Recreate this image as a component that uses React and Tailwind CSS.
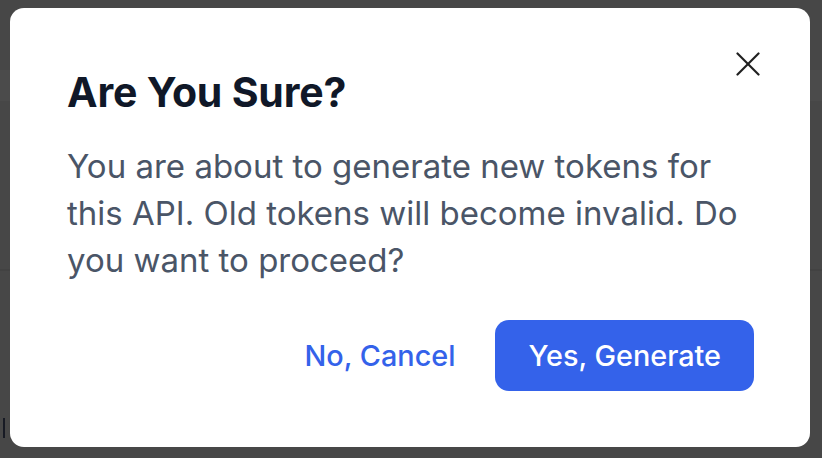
import React from "react";

// Close icon drawn to match the thin cross in the reference
function CloseIcon() {
  return (
    <svg width="24" height="24" viewBox="0 0 24 24" fill="none" stroke="currentColor" strokeWidth="2.2" strokeLinecap="round">
      <line x1="1.5" y1="1.5" x2="22.5" y2="22.5" />
      <line x1="22.5" y1="1.5" x2="1.5" y2="22.5" />
    </svg>
  );
}

export default function App() {
  return (
    <div
      className="relative w-[822px] h-[458px] overflow-hidden bg-[#474747]"
      style={{ fontFamily: "Inter, 'Noto Sans', sans-serif" }}
    >
      {/* Dimmed page behind the dialog */}
      <div className="flex flex-col h-full">
        <div className="h-[70px]" />
        <div className="h-[31px] bg-[#4b4b4b]" />
        <div className="h-[168px]" />
        <div className="h-[2px] bg-[#424242]" />
        <div className="flex-1 flex items-start pl-[3px] pt-[147px]">
          <div className="w-[2px] h-[20px] bg-[#171a24]" />
        </div>
      </div>

      {/* Dialog */}
      <div className="absolute inset-0 pl-[10px] pt-[8px]">
        <div className="relative w-[800px] bg-white rounded-[14px] pl-[57px] pr-[56px] pt-[58px] pb-[56px]">
          <button className="absolute top-[44px] right-[50px] text-[#1f1f1f]">
            <CloseIcon />
          </button>

          <h2 className="text-[41px] leading-[52px] font-bold text-[#101828] tracking-[-0.2px]">
            Are You Sure?
          </h2>

          <p className="mt-[25px] text-[33px] leading-[47px] text-[#4a5567]">
            You are about to generate new tokens for this API. Old tokens will become invalid. Do you want to proceed?
          </p>

          <div className="mt-[36px] flex justify-end items-center gap-[8px]">
            <button className="px-[32px] h-[71px] text-[28.8px] font-medium text-[#3462ea]">
              No, Cancel
            </button>
            <button className="px-[33px] h-[71px] rounded-[14px] bg-[#3462ea] text-[28.8px] font-medium text-white">
              Yes, Generate
            </button>
          </div>
        </div>
      </div>
    </div>
  );
}
